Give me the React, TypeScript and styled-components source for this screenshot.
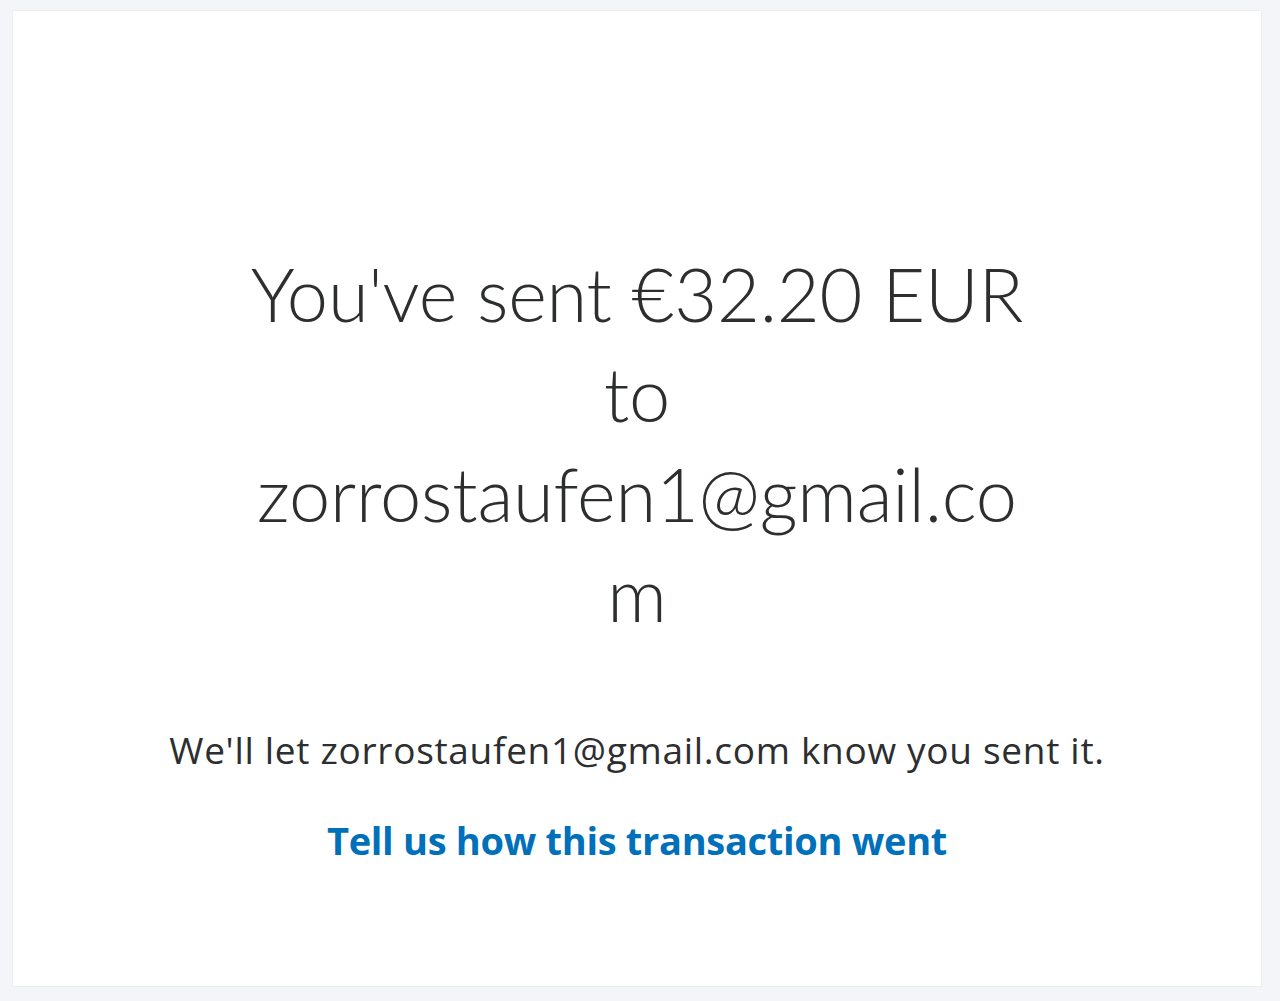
import React from 'react'
import styled, { createGlobalStyle } from 'styled-components'

const GlobalStyle = createGlobalStyle`
  html, body {
    margin: 0;
    padding: 0;
    background: #f3f5f9;
  }
  body {
    font-family: 'Open Sans', 'Liberation Sans', sans-serif;
    color: #2c2e2f;
  }
`

const Page = styled.div`
  padding: 10px 18px 14px 12px;
  height: 1001px;
  box-sizing: border-box;
`

const Card = styled.section`
  height: 977px;
  box-sizing: border-box;
  background: #ffffff;
  border: 1px solid #eceef1;
  display: flex;
  flex-direction: column;
  align-items: center;
  padding-top: 233px;
`

const Title = styled.h1`
  width: 800px;
  margin: 0;
  font-family: 'Lato', 'Open Sans', sans-serif;
  font-weight: 300;
  font-size: 74px;
  line-height: 100px;
  letter-spacing: -0.2px;
  text-align: center;
  overflow-wrap: anywhere;
  color: #2c2e2f;
`

const Note = styled.p`
  margin: 84px 0 0 0;
  font-size: 37px;
  line-height: 44px;
  letter-spacing: 0.7px;
  text-align: center;
  color: #2c2e2f;
`

const FeedbackLink = styled.a`
  margin-top: 46px;
  font-size: 38px;
  line-height: 44px;
  letter-spacing: -0.3px;
  font-weight: 700;
  color: #0070ba;
  text-decoration: none;
`

const App = () => {
  return (
    <>
      <GlobalStyle />
      <Page>
        <Card>
          <Title>You've sent €32.20 EUR to zorrostaufen1@gmail.com</Title>
          <Note>We'll let zorrostaufen1@gmail.com know you sent it.</Note>
          <FeedbackLink href="#">Tell us how this transaction went</FeedbackLink>
        </Card>
      </Page>
    </>
  )
}

export default App
